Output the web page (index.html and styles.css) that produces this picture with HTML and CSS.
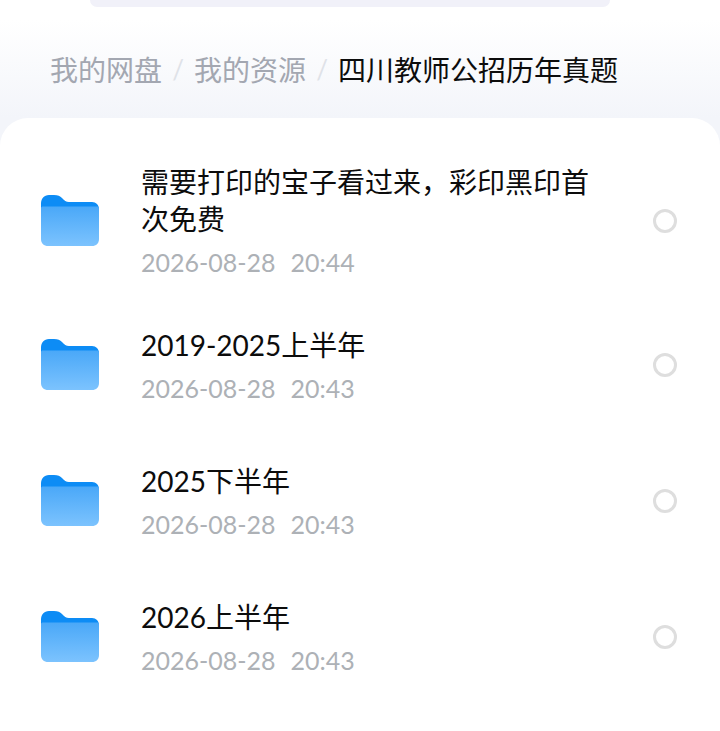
FILE: index.html

```html
<!DOCTYPE html>
<html lang="zh-CN">
<head>
  <meta charset="UTF-8" />
  <meta name="viewport" content="width=device-width, initial-scale=1.0" />
  <title>四川教师公招历年真题</title>
  <link rel="stylesheet" href="styles.css">
</head>
<body>
  <div class="search-edge"></div>
  <nav class="crumbs">
    <span class="crumb">我的网盘</span>
    <span class="sep">/</span>
    <span class="crumb">我的资源</span>
    <span class="sep">/</span>
    <span class="crumb current">四川教师公招历年真题</span>
  </nav>
  <main class="card">
    <div class="row">
      <svg class="folder" viewBox="0 0 58 51"><use href="#folder-shape"></use></svg>
      <div class="info">
        <div class="name">需要打印的宝子看过来，彩印黑印首次免费</div>
        <div class="date">2026-08-28&nbsp;&nbsp;20:44</div>
      </div>
      <span class="radio"></span>
    </div>
    <div class="row">
      <svg class="folder" viewBox="0 0 58 51"><use href="#folder-shape"></use></svg>
      <div class="info">
        <div class="name">2019-2025上半年</div>
        <div class="date">2026-08-28&nbsp;&nbsp;20:43</div>
      </div>
      <span class="radio"></span>
    </div>
    <div class="row">
      <svg class="folder" viewBox="0 0 58 51"><use href="#folder-shape"></use></svg>
      <div class="info">
        <div class="name">2025下半年</div>
        <div class="date">2026-08-28&nbsp;&nbsp;20:43</div>
      </div>
      <span class="radio"></span>
    </div>
    <div class="row">
      <svg class="folder" viewBox="0 0 58 51"><use href="#folder-shape"></use></svg>
      <div class="info">
        <div class="name">2026上半年</div>
        <div class="date">2026-08-28&nbsp;&nbsp;20:43</div>
      </div>
      <span class="radio"></span>
    </div>
  </main>

  <svg class="defs" width="0" height="0">
    <defs>
      <linearGradient id="folder-front" x1="0" y1="0" x2="0" y2="1">
        <stop offset="0" stop-color="#4aa8f8" />
        <stop offset="1" stop-color="#7cc3fe" />
      </linearGradient>
      <symbol id="folder-shape" viewBox="0 0 58 51">
        <path fill="#0d8cf5" d="M0 9C0 3.500 3 0 8 0H13C17 0 19 1 21 3C23.500 5.500 25 7 28 7H51C55 7 58 10 58 14V30H0Z" />
        <path fill="url(#folder-front)" d="M0 13C0 12 1 11.500 2 11.500H56C57 11.500 58 12 58 13V44C58 48.500 55 51 51 51H7C3 51 0 48.500 0 44Z" />
      </symbol>
    </defs>
  </svg>
</body>
</html>
```

FILE: styles.css

```css
html, body {
  margin: 0;
  height: 100%;
}
body {
  font-family: Lato, "Noto Sans CJK SC", sans-serif;
  background: linear-gradient(#fff 20px, #f3f5fa 118px);
  color: #000;
  overflow: hidden;
}
.search-edge {
  height: 7px;
  margin: 0 110px 0 90px;
  background: #f1f1f9;
  border-radius: 0 0 18px 18px;
}
.crumbs {
  display: flex;
  align-items: center;
  height: 111px;
  padding: 12px 0 0 50px;
  box-sizing: border-box;
  font-size: 28px;
  white-space: nowrap;
}
.crumb {
  color: #a3a7b1;
}
.crumb.current {
  color: #0c0c0c;
}
.sep {
  width: 32px;
  text-align: center;
  color: #dfe2e8;
  font-size: 26px;
}
.card {
  background: #fff;
  border-radius: 28px 28px 0 0;
  height: 613px;
  padding-top: 26px;
  box-sizing: border-box;
}
.row {
  display: flex;
  align-items: center;
  min-height: 136px;
  padding: 18px 43px 18px 41px;
  box-sizing: border-box;
}
.folder {
  width: 58px;
  height: 51px;
  flex: none;
}
.info {
  flex: 1;
  margin: 0 52px 0 42px;
  padding-top: 2px;
}
.name {
  font-size: 28px;
  line-height: 37px;
  color: #0c0c0c;
}
.date {
  font-size: 25px;
  line-height: 32px;
  margin-top: 8px;
  word-spacing: 1px;
  color: #adb1b6;
}
.radio {
  width: 24px;
  height: 24px;
  flex: none;
  margin-top: 2px;
  box-sizing: border-box;
  border: 3px solid #dedede;
  border-radius: 50%;
}
.defs {
  position: absolute;
}
```
